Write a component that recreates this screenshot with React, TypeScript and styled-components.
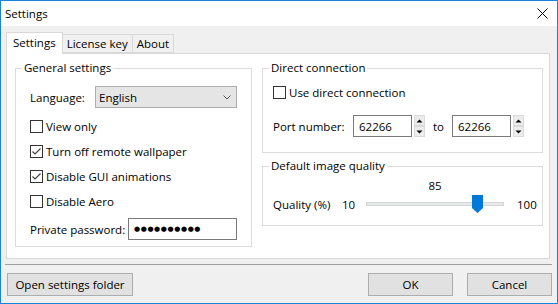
import React from 'react';
import styled, { createGlobalStyle } from 'styled-components';

const GlobalStyle = createGlobalStyle`
  html, body {
    margin: 0;
    padding: 0;
    background: #ffffff;
  }
  body {
    font-family: 'Open Sans', 'Noto Sans', sans-serif;
    font-size: 11.5px;
    color: #000000;
  }
  * {
    box-sizing: border-box;
  }
`;

/** Window frame */
const Window = styled.div`
  width: 558px;
  height: 304px;
  border: 1px solid #1883d7;
  background: #f0f0f0;
  display: flex;
  flex-direction: column;
`;

const TitleBar = styled.div`
  height: 25px;
  flex-shrink: 0;
  background: #ffffff;
  display: flex;
  align-items: center;
  justify-content: space-between;
  padding-left: 4px;
`;

const CloseButton = styled.div`
  width: 30px;
  height: 25px;
  display: flex;
  align-items: center;
  justify-content: center;
`;

/** Tabs */
const TabsArea = styled.div`
  padding: 6px 7px 0 5px;
`;

const TabList = styled.div`
  height: 21px;
  display: flex;
  align-items: flex-end;
`;

const Tab = styled.div<{ $active?: boolean; $first?: boolean }>`
  position: relative;
  z-index: ${({ $active }) => ($active ? 1 : 0)};
  height: ${({ $active }) => ($active ? '22px' : '19px')};
  margin-bottom: ${({ $active }) => ($active ? '-1px' : '0')};
  margin-left: ${({ $first }) => ($first ? '0' : '-1px')};
  padding: ${({ $active }) => ($active ? '0 6px 2px' : '0 4px')};
  display: flex;
  align-items: center;
  border: 1px solid #d9d9d9;
  border-bottom: ${({ $active }) => ($active ? 'none' : '1px solid #d9d9d9')};
  background: ${({ $active }) => ($active ? '#ffffff' : '#f0f0f0')};
  white-space: nowrap;
`;

const Panel = styled.div`
  height: 206px;
  border: 1px solid #d9d9d9;
  background: #ffffff;
  display: grid;
  grid-template-columns: 237px 281px;
  column-gap: 10px;
  align-items: start;
  padding: 6px 0 0 8px;
`;

const Column = styled.div`
  display: flex;
  flex-direction: column;
  gap: 5px;
`;

/** Group boxes */
const Group = styled.fieldset`
  margin: 0;
  padding: 0 6px;
  min-width: 0;
  border: 1px solid #dcdcdc;
`;

const Legend = styled.legend`
  padding: 0 2px;
  line-height: 16px;
`;

const GroupBody = styled.div<{ $pad: string }>`
  padding: ${({ $pad }) => $pad};
  display: flex;
  flex-direction: column;
`;

const Row = styled.div<{ $height?: number; $top?: number }>`
  height: ${({ $height = 22 }) => `${$height}px`};
  margin-top: ${({ $top = 0 }) => `${$top}px`};
  display: flex;
  align-items: center;
  white-space: nowrap;
`;

const Label = styled.span<{ $width?: number }>`
  width: ${({ $width }) => ($width ? `${$width}px` : 'auto')};
  flex-shrink: 0;
`;

/** Controls */
const Select = styled.div`
  width: 142px;
  height: 22px;
  border: 1px solid #adadad;
  background: #e5e5e5;
  display: flex;
  align-items: center;
  justify-content: space-between;
  padding: 0 5px 0 3px;
`;

const TextBox = styled.div<{ $width: number }>`
  width: ${({ $width }) => `${$width}px`};
  height: 22px;
  border: 1px solid #7a7a7a;
  background: #ffffff;
  display: flex;
  align-items: center;
  padding-left: 5px;
  flex-shrink: 0;
`;

const Dots = styled.span`
  font-family: 'DejaVu Sans', sans-serif;
  font-size: 7px;
  letter-spacing: 0.6px;
`;

const CheckBox = styled.span`
  width: 13px;
  height: 13px;
  border: 1px solid #333333;
  background: #ffffff;
  margin-right: 3px;
  display: flex;
  align-items: center;
  justify-content: center;
  flex-shrink: 0;
`;

const Spinner = styled.div`
  width: 17px;
  height: 22px;
  margin: 0 8px 0 2px;
  display: flex;
  flex-direction: column;
`;

const SpinButton = styled.div`
  height: 11px;
  background: #ececec;
  border: 1px solid #dadada;
  display: flex;
  align-items: center;
  justify-content: center;
`;

const ToLabel = styled.span`
  width: 19px;
  flex-shrink: 0;
`;

const ValueLabel = styled.div`
  width: 138px;
  margin-left: 93px;
  line-height: 16px;
  text-align: center;
`;

const SliderTrack = styled.div`
  position: relative;
  width: 138px;
  height: 20px;
  flex-shrink: 0;
  display: flex;
  align-items: center;
`;

const TrackLine = styled.div`
  width: 100%;
  height: 4px;
  background: #e7eaea;
  border: 1px solid #d6d6d6;
`;

const Thumb = styled.svg`
  position: absolute;
  top: 1px;
  margin-left: -5.5px;
`;

const MaxLabel = styled.span`
  margin-left: 13px;
`;

/** Footer */
const Separator = styled.div`
  height: 1px;
  margin: 5px 5px 0 4px;
  background: #a0a0a0;
`;

const Footer = styled.div`
  display: flex;
  align-items: center;
  padding: 8px 5px 7px 6px;
`;

const Button = styled.button<{ $width: number; $gap?: number }>`
  width: ${({ $width }) => `${$width}px`};
  height: 23px;
  margin-left: ${({ $gap = 0 }) => `${$gap}px`};
  border: 1px solid #adadad;
  background: #e1e1e1;
  font: inherit;
  color: #000000;
  padding: 0;
`;

const Spacer = styled.div`
  flex: 1;
`;

const Check = ({ checked, label }: { checked?: boolean; label: string }) => (
  <>
    <CheckBox>
      {checked && (
        <svg width="11" height="11" viewBox="0 0 11 11">
          <polyline points="1.5,5.5 4,8 9.5,2.5" fill="none" stroke="#3c3c3c" strokeWidth="1.1" />
        </svg>
      )}
    </CheckBox>
    <span>{label}</span>
  </>
);

const Spin = () => (
  <Spinner>
    <SpinButton>
      <svg width="7" height="4" viewBox="0 0 7 4">
        <path d="M0.5 3.5 L3.5 0.5 L6.5 3.5 Z" fill="#000" />
      </svg>
    </SpinButton>
    <SpinButton>
      <svg width="7" height="4" viewBox="0 0 7 4">
        <path d="M0.5 0.5 L3.5 3.5 L6.5 0.5 Z" fill="#000" />
      </svg>
    </SpinButton>
  </Spinner>
);

const quality = { min: 10, max: 100, value: 85 };

const App = () => {
  const thumbPos = 5.5 + ((quality.value - quality.min) / (quality.max - quality.min)) * 127;

  return (
    <>
      <GlobalStyle />
      <Window>
        <TitleBar>
          <span>Settings</span>
          <CloseButton>
            <svg width="11" height="11" viewBox="0 0 11 11">
              <path d="M0.5 0.5 L10.5 10.5 M10.5 0.5 L0.5 10.5" stroke="#000" strokeWidth="1" />
            </svg>
          </CloseButton>
        </TitleBar>

        <TabsArea>
          <TabList>
            <Tab $active $first>
              Settings
            </Tab>
            <Tab>License key</Tab>
            <Tab>About</Tab>
          </TabList>
          <Panel>
            <Group>
              <Legend>General settings</Legend>
              <GroupBody $pad="10px 8px 6px">
                <Row>
                  <Label $width={65}>Language:</Label>
                  <Select>
                    <span>English</span>
                    <svg width="8" height="5" viewBox="0 0 8 5">
                      <polyline points="0.5,0.5 4,4 7.5,0.5" fill="none" stroke="#555" strokeWidth="1" />
                    </svg>
                  </Select>
                </Row>
                <Row $height={25} $top={6}>
                  <Check label="View only" />
                </Row>
                <Row $height={25}>
                  <Check checked label="Turn off remote wallpaper" />
                </Row>
                <Row $height={25}>
                  <Check checked label="Disable GUI animations" />
                </Row>
                <Row $height={25}>
                  <Check label="Disable Aero" />
                </Row>
                <Row $top={4}>
                  <Label $width={98}>Private password:</Label>
                  <TextBox $width={109}>
                    <Dots>●●●●●●●●●●</Dots>
                  </TextBox>
                </Row>
              </GroupBody>
            </Group>

            <Column>
              <Group>
                <Legend>Direct connection</Legend>
                <GroupBody $pad="5px 4px 15px">
                  <Row>
                    <Check label="Use direct connection" />
                  </Row>
                  <Row $top={12}>
                    <Label $width={80}>Port number:</Label>
                    <TextBox $width={59}>62266</TextBox>
                    <Spin />
                    <ToLabel>to</ToLabel>
                    <TextBox $width={59}>62266</TextBox>
                    <Spin />
                  </Row>
                </GroupBody>
              </Group>

              <Group>
                <Legend>Default image quality</Legend>
                <GroupBody $pad="4px 4px 11px">
                  <ValueLabel>{quality.value}</ValueLabel>
                  <Row $height={20}>
                    <Label $width={69}>Quality (%)</Label>
                    <Label $width={24}>{quality.min}</Label>
                    <SliderTrack>
                      <TrackLine />
                      <Thumb width="11" height="18" viewBox="0 0 11 18" style={{ left: thumbPos }}>
                        <path d="M0 0 H11 V13 L5.5 18 L0 13 Z" fill="#0078d7" />
                      </Thumb>
                    </SliderTrack>
                    <MaxLabel>{quality.max}</MaxLabel>
                  </Row>
                </GroupBody>
              </Group>
            </Column>
          </Panel>
        </TabsArea>

        <Separator />
        <Footer>
          <Button $width={126}>Open settings folder</Button>
          <Spacer />
          <Button $width={85}>OK</Button>
          <Button $width={85} $gap={14}>
            Cancel
          </Button>
        </Footer>
      </Window>
    </>
  );
};

export default App;
